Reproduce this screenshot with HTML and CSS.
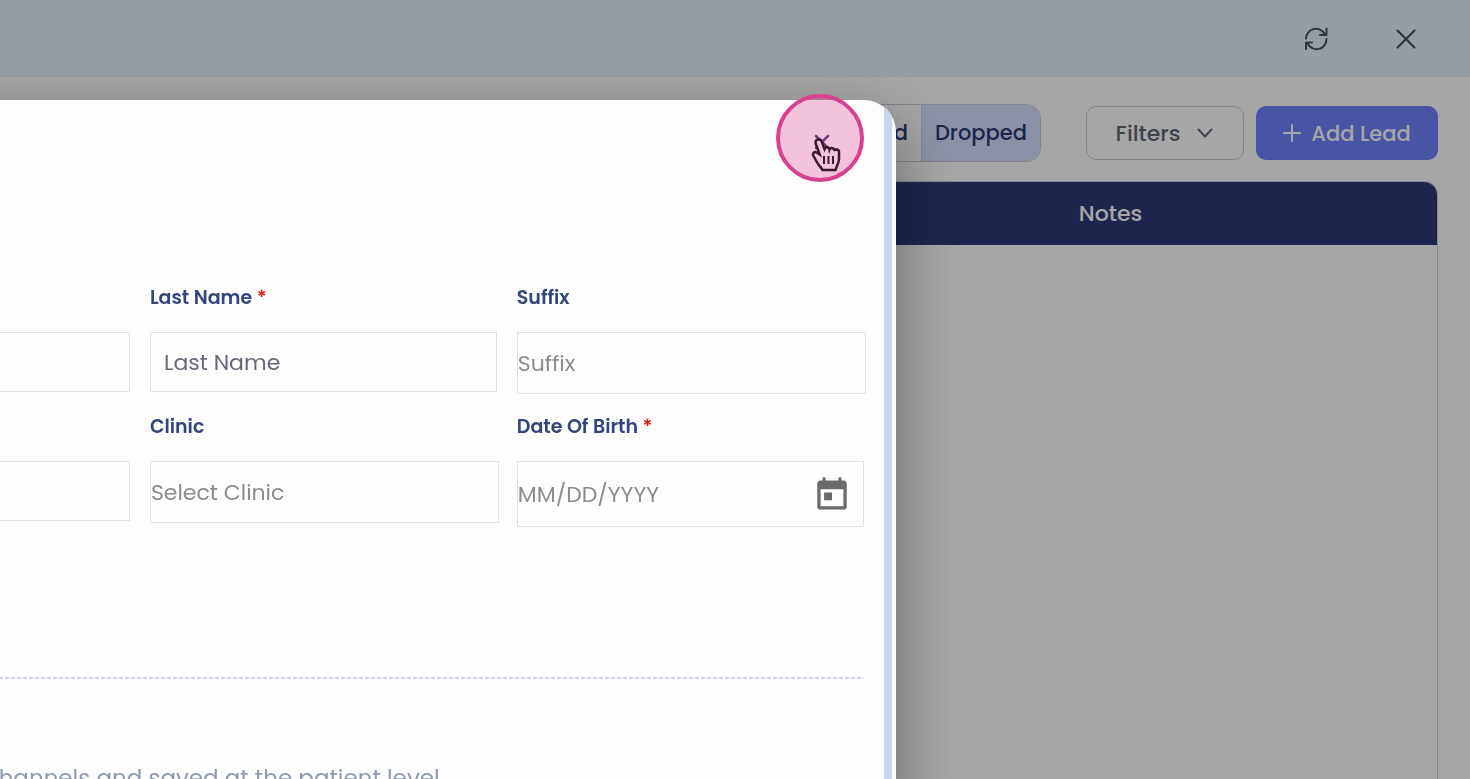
FILE: index.html
```html
<!DOCTYPE html>
<html lang="en">
  <head>
    <meta charset="UTF-8" />
    <meta name="viewport" content="width=device-width, initial-scale=1.0" />
    <title>Leads</title>
    <link rel="stylesheet" href="styles.css">
  </head>
  <body>
    <header class="topbar">
      <button type="button" class="icon-btn" aria-label="Refresh">
        <svg width="26" height="26" viewBox="0 0 26 26" fill="none" stroke="currentColor" stroke-width="2" stroke-linecap="round" stroke-linejoin="round">
          <path d="M3 12.5A10 10 0 0 1 22 8.500M23.500 2.500v6.500h-6.500M23.500 13A10 10 0 0 1 4.500 17.500M3 23v-6.500h6" />
        </svg>
      </button>
      <button type="button" class="icon-btn" aria-label="Close page">
        <svg width="26" height="26" viewBox="0 0 26 26" fill="none" stroke="currentColor" stroke-width="2.200" stroke-linecap="round">
          <path d="M4.500 4.500l17 17M21.500 4.500l-17 17" />
        </svg>
      </button>
    </header>

    <main class="page">
      <div class="toolbar">
        <div class="tabs">
          <button type="button" class="tab">Closed</button>
          <button type="button" class="tab active">Dropped</button>
        </div>
        <div class="actions">
          <button type="button" class="btn btn-filters">
            Filters
            <svg width="18" height="18" viewBox="0 0 18 18" fill="none" stroke="currentColor" stroke-width="2" stroke-linecap="round" stroke-linejoin="round">
              <path d="M2.500 5.500l6.500 7 6.500-7" />
            </svg>
          </button>
          <button type="button" class="btn btn-add">
            <svg width="18" height="18" viewBox="0 0 18 18" fill="none" stroke="currentColor" stroke-width="2" stroke-linecap="round">
              <path d="M9 1v16M1 9h16" />
            </svg>
            Add Lead
          </button>
        </div>
      </div>

      <div class="table-card">
        <table class="leads">
          <thead>
            <tr>
              <th>Lead</th>
              <th class="col-notes">Notes</th>
            </tr>
          </thead>
        </table>
      </div>
    </main>

    <div class="overlay"></div>

    <div class="dialog" role="dialog" aria-label="Lead">
      <div class="dialog-head">
        <button type="button" class="close-btn" aria-label="Close">
          <svg width="18" height="18" viewBox="0 0 18 18" fill="none" stroke="currentColor" stroke-width="2.500" stroke-linecap="round">
            <path d="M3 3l12 12M15 3L3 15" />
          </svg>
        </button>
        <!-- click highlight with hand pointer -->
        <div class="pointer">
          <svg width="34" height="38" viewBox="0 0 34 38">
            <path class="hand" d="M9 4.500c-2 .4-3 2-2.300 4l4 11-3.200-2c-2-1.200-4.300.8-3.300 3l4 7c1.500 3 4 5 5.300 7.500h13c.5-3 3.500-6.500 3.500-11v-7c0-3-4-3.500-4.500-1 0-3-4-4-5-1.500-.5-2.700-4-3-5-.5L12.500 6C12 5 10.500 4.200 9 4.500z" />
            <path class="fingers" d="M15 21v8M19.500 21v8M24 21v8" />
          </svg>
        </div>
      </div>

      <form class="lead-form">
        <div class="field">
          <input type="text" id="firstName" class="input" aria-label="First Name" />
        </div>
        <div class="field">
          <label for="lastName">Last Name <span class="req">*</span></label>
          <input type="text" id="lastName" class="input" placeholder="Last Name" />
        </div>
        <div class="field">
          <label for="suffix">Suffix</label>
          <input type="text" id="suffix" class="input input-auto" placeholder="Suffix" />
        </div>
        <div class="field">
          <input type="text" id="email" class="input" aria-label="Email" />
        </div>
        <div class="field">
          <label for="clinic">Clinic</label>
          <input type="text" id="clinic" class="input input-auto" placeholder="Select Clinic" />
        </div>
        <div class="field">
          <label for="dob">Date Of Birth <span class="req">*</span></label>
          <div class="date-box">
            <input type="text" id="dob" class="date-input" placeholder="MM/DD/YYYY" />
            <button type="button" class="date-btn" aria-label="Choose date">
              <svg width="38" height="38" viewBox="0 0 24 24" fill="currentColor">
                <path d="M19.500 3.500h-1.500V1.500h-2v2H8V1.500H6v2H4.500c-1.100 0-1.800.9-1.800 2v14.500c0 1.100.7 1.800 1.800 1.800h15c1.100 0 1.800-.7 1.800-1.800V5.500c0-1.100-.7-2-1.800-2zm-.3 16.300H4.800V9h14.400v10.800zM7 11h5v5H7z" />
              </svg>
            </button>
          </div>
        </div>
      </form>

      <svg class="divider" height="2" aria-hidden="true">
        <line x1="0" y1="1" x2="100%" y2="1" />
      </svg>
      <p class="hint">channels and saved at the patient level</p>
    </div>
  </body>
</html>
```
FILE: styles.css
```css
* {
  box-sizing: border-box;
}
body {
  margin: 0;
  height: 100vh;
  overflow: hidden;
  display: flex;
  flex-direction: column;
  font-family: Poppins, Inter, sans-serif;
  font-size: 22px;
  background-color: #ffffff;
}
button,
input {
  font: inherit;
}
button {
  padding: 0;
  border: none;
  background: none;
  color: inherit;
  cursor: pointer;
}
svg {
  display: block;
  flex: none;
}

.topbar {
  display: flex;
  justify-content: flex-end;
  align-items: center;
  gap: 64px;
  height: 77px;
  flex: none;
  padding: 0 51px;
  background-color: #e7f2fb;
  color: #4c535f;
}
.page {
  flex: 1;
  display: flex;
  flex-direction: column;
  padding: 27px 32px 0;
}
.toolbar {
  display: flex;
  justify-content: flex-end;
  align-items: center;
  gap: 45px;
  margin-bottom: 19px;
}
.tabs {
  display: flex;
  height: 58px;
  border: 1px solid #c8ccd6;
  border-radius: 14px;
  overflow: hidden;
  font-size: 21px;
  font-weight: 500;
  color: #2e3a75;
}
.tab {
  padding: 0 13px 2px;
}
.tab.active {
  border-left: 1px solid #c8ccd6;
  background-color: #d7e0fd;
}
.actions {
  display: flex;
  gap: 12px;
}
.btn {
  display: flex;
  align-items: center;
  justify-content: center;
  height: 54px;
  border-radius: 10px;
  font-weight: 500;
}
.btn-filters {
  width: 158px;
  gap: 16px;
  border: 1px solid #c8ccd2;
  color: #626975;
}
.btn-add {
  width: 182px;
  gap: 10px;
  font-size: 21px;
  background-color: #7081fe;
  color: #ffffff;
}
.table-card {
  flex: 1;
  border: 1px solid #ccd0e0;
  border-bottom: none;
  border-radius: 14px 14px 0 0;
  overflow: hidden;
}
.leads {
  width: 100%;
  border-collapse: collapse;
  table-layout: fixed;
}
.leads th {
  height: 63px;
  padding: 0;
  font-weight: 500;
  background-color: #2e3a75;
  color: #ffffff;
}
.leads .col-notes {
  width: 46.5%;
}

.overlay {
  position: fixed;
  inset: 0;
  background-color: rgba(0, 0, 0, 0.35);
}

/* dialog runs past the left and bottom edges of the window */
.dialog {
  position: fixed;
  top: 100px;
  bottom: -40px;
  left: -249px;
  right: calc(39% + 1px);
  padding: 0 32px;
  border-radius: 32px;
  background-color: #fdfdfd;
  box-shadow: 0 22px 60px 4px rgba(0, 0, 0, 0.35);
}
/* scrollbar track, clipped by the rounded corner */
.dialog::after {
  content: "";
  position: absolute;
  inset: 0;
  border-radius: 32px;
  background: linear-gradient(to left, transparent 4px, #c9d5e9 4px 12px, transparent 12px);
  pointer-events: none;
}
.dialog-head {
  position: relative;
  display: flex;
  justify-content: flex-end;
  height: 180px;
  padding: 33px 33px 0 0;
}
.close-btn {
  width: 18px;
  height: 18px;
  color: #34457c;
}
.pointer {
  position: absolute;
  top: -6px;
  right: 0;
  display: flex;
  justify-content: center;
  align-items: center;
  width: 88px;
  height: 88px;
  padding: 32px 0 0 12px;
  border: 4px solid #d9408f;
  border-radius: 50%;
  background-color: rgba(217, 64, 143, 0.3);
}
.hand {
  fill: #f2c4dc;
  stroke: #3a1a30;
  stroke-width: 2.500;
}
.fingers {
  fill: none;
  stroke: #3a1a30;
  stroke-width: 2;
}

.lead-form {
  display: grid;
  grid-template-columns: repeat(3, minmax(0, 1fr));
  gap: 0 20px;
}
.field {
  display: grid;
  grid-template-columns: minmax(0, 1fr);
  grid-template-rows: 52px auto;
  align-items: start;
  height: 129px;
}
.field label {
  line-height: 36px;
  font-size: 19px;
  font-weight: 600;
  color: #34457c;
}
.req {
  color: #d91c1c;
}
.input {
  grid-row: 2;
  width: 100%;
  height: 60px;
  padding: 0 13px;
  border: 1px solid #dfe0e2;
  border-radius: 0;
  outline: none;
  background-color: transparent;
}
.input::placeholder {
  color: #666a78;
  opacity: 1;
}
.input-auto {
  box-sizing: content-box;
  padding: 0;
}
.input-auto::placeholder,
.date-input::placeholder {
  color: #8c8c8c;
  opacity: 1;
}
.date-box {
  display: flex;
  align-items: center;
  height: 66px;
  padding-right: 12px;
  border: 1px solid #dfe0e2;
}
.date-input {
  flex: 1;
  min-width: 0;
  padding: 0;
  border: none;
  outline: none;
  background-color: transparent;
}
.date-btn {
  color: #6b6b6b;
}
.divider {
  width: 100%;
  margin-top: 139px;
}
.divider line {
  stroke: #cdd3e2;
  stroke-width: 2;
  stroke-dasharray: 4 2;
}
.hint {
  margin: 82px 424px 0 0;
  line-height: 34px;
  font-size: 23px;
  text-align: right;
  white-space: nowrap;
  color: #8f9bad;
}
```
